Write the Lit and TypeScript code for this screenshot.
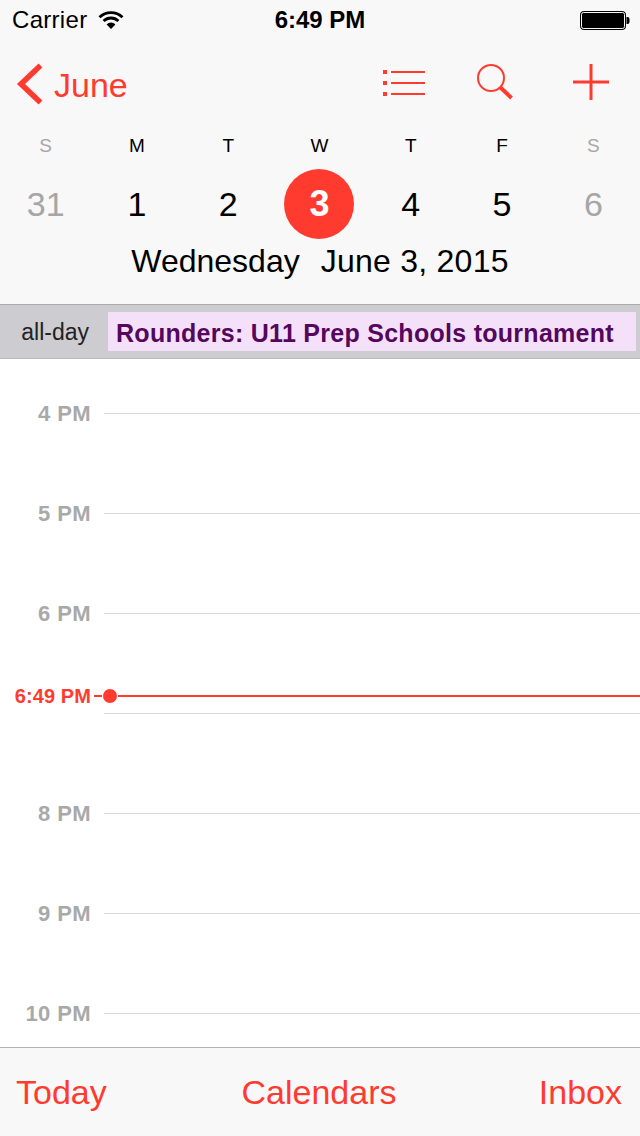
import { LitElement, html, css, svg } from 'lit';
import { customElement, state } from 'lit/decorators.js';

const RED = '#ff3b30';

@customElement('app-root')
export class AppRoot extends LitElement {
    @state() private _days = [
        { letter: 'S', num: '31', muted: true },
        { letter: 'M', num: '1' },
        { letter: 'T', num: '2' },
        { letter: 'W', num: '3', today: true },
        { letter: 'T', num: '4' },
        { letter: 'F', num: '5' },
        { letter: 'S', num: '6', muted: true },
    ];
    @state() private _hours = ['4 PM', '5 PM', '6 PM', '', '8 PM', '9 PM', '10 PM'];

    private _wifi() {
        return svg`<svg width="26" height="20" viewBox="0 0 26 20">
            <path d="M1.5 7.2a16.5 16.5 0 0 1 23 0" fill="none" stroke="#000" stroke-width="2.8"/>
            <path d="M5.6 11a10.6 10.6 0 0 1 14.8 0" fill="none" stroke="#000" stroke-width="2.8"/>
            <path d="M13 19l-4.4-4.6a6.2 6.2 0 0 1 8.8 0z" fill="#000"/>
        </svg>`;
    }

    private _battery() {
        return svg`<svg width="50" height="20" viewBox="0 0 50 20">
            <rect x="0.5" y="1.5" width="45" height="18" rx="3" fill="#000" stroke="#000" stroke-width="1"/>
            <rect x="1.5" y="2.5" width="43" height="16" rx="2" fill="none" stroke="#f8f8f8" stroke-width="1"/>
            <path d="M46.5 7h1a2 2 0 0 1 2 2v3a2 2 0 0 1-2 2h-1z" fill="#000"/>
        </svg>`;
    }

    private _back() {
        return svg`<svg width="30" height="44" viewBox="0 0 30 44">
            <path d="M27.5 2.5L8 21l19.5 18.5" fill="none" stroke="${RED}" stroke-width="5.6"/>
        </svg>`;
    }

    private _list() {
        return svg`<svg class="list" width="43" height="30" viewBox="0 0 43 30">
            <path d="M0 3h4M0 14h4M0 25h4" stroke="${RED}" stroke-width="4"/>
            <path d="M8 3h34M8 14h34M8 25h34" stroke="${RED}" stroke-width="2"/>
        </svg>`;
    }

    private _search() {
        return svg`<svg class="search" width="36" height="36" viewBox="0 0 36 36">
            <circle cx="14" cy="14" r="13" fill="none" stroke="${RED}" stroke-width="2"/>
            <path d="M23.5 23.5L34.5 34" stroke="${RED}" stroke-width="4"/>
        </svg>`;
    }

    private _plus() {
        return svg`<svg width="36" height="36" viewBox="0 0 36 36">
            <path d="M18 0v36M0 18h36" stroke="${RED}" stroke-width="3"/>
        </svg>`;
    }

    render() {
        return html`
            <header class="top">
                <div class="status">
                    <div class="status-left">Carrier ${this._wifi()}</div>
                    <div class="clock">6:49 PM</div>
                    <div class="status-right">${this._battery()}</div>
                </div>
                <div class="nav">
                    <div class="back">${this._back()}<span>June</span></div>
                    <div class="actions">${this._list()}${this._search()}${this._plus()}</div>
                </div>
                <div class="week">
                    ${this._days.map(d => html`<div class="letter ${d.muted ? 'muted' : ''}">${d.letter}</div>`)}
                    ${this._days.map(d => html`
                        <div class="num ${d.muted ? 'muted' : ''}">
                            <span class="${d.today ? 'today' : ''}">${d.num}</span>
                        </div>`)}
                </div>
                <div class="date"><span>Wednesday</span><span class="full">June 3, 2015</span></div>
            </header>

            <div class="allday">
                <div class="allday-label">all-day</div>
                <div class="event">Rounders: U11 Prep Schools tournament</div>
            </div>

            <main class="timeline">
                ${this._hours.map(h => html`
                    <div class="hour">
                        <div class="hour-label">${h}</div>
                        <div class="hour-line"></div>
                    </div>`)}
                <div class="now">
                    <span class="now-label">6:49 PM</span>
                    <span class="now-tick"></span>
                    <span class="now-dot"></span>
                    <span class="now-line"></span>
                </div>
            </main>

            <footer class="bottom">
                <span>Today</span>
                <span>Calendars</span>
                <span class="inbox">Inbox</span>
            </footer>
        `;
    }

    static styles = css`
        :host {
            display: flex;
            flex-direction: column;
            width: 640px;
            height: 1136px;
            overflow: hidden;
            background: #fff;
            font-family: 'Liberation Sans', Arial, sans-serif;
            color: #000;
        }

        .top {
            flex: none;
            height: 305px;
            box-sizing: border-box;
            background: #f8f8f8;
            border-bottom: 1px solid #a9a9ab;
        }

        .status {
            display: grid;
            grid-template-columns: 1fr auto 1fr;
            align-items: center;
            height: 40px;
            padding: 0 12px;
            font-size: 24px;
        }

        .status-left {
            display: flex;
            align-items: center;
            gap: 11px;
            letter-spacing: 0.3px;
        }

        .clock {
            font-weight: bold;
        }

        .status-right {
            display: flex;
            justify-content: flex-end;
            margin-right: -2px;
        }

        .status svg {
            display: block;
        }

        .nav {
            display: flex;
            justify-content: space-between;
            align-items: center;
            height: 88px;
            padding: 0 31px 0 13px;
            margin-top: -2px;
        }

        .back {
            display: flex;
            align-items: center;
            gap: 11px;
            padding-top: 6px;
            font-size: 34px;
            color: #ff3b30;
        }

        .actions {
            display: flex;
            align-items: center;
        }

        .actions svg {
            display: block;
        }

        .actions .list {
            margin: 3px 51px 0 0;
        }

        .actions .search {
            margin-right: 60px;
        }

        .week {
            display: grid;
            grid-template-columns: repeat(7, 1fr);
            margin: 8px 1px 0 0;
        }

        .letter {
            text-align: center;
            font-size: 19px;
            line-height: 24px;
            height: 35px;
        }

        .num {
            display: flex;
            justify-content: center;
            font-size: 34px;
            height: 70px;
        }

        .num span {
            width: 70px;
            height: 70px;
            line-height: 70px;
            text-align: center;
            border-radius: 50%;
        }

        .num .today {
            background: #ff3b30;
            color: #fff;
            font-size: 36px;
            font-weight: bold;
        }

        .muted {
            color: #a6a6a6;
        }

        .date {
            display: flex;
            justify-content: center;
            gap: 21px;
            font-size: 32px;
            line-height: 44px;
        }

        .date .full {
            letter-spacing: 0.25px;
        }

        .allday {
            flex: none;
            display: flex;
            align-items: center;
            height: 54px;
            box-sizing: border-box;
            background: #ccccd1;
            border-bottom: 1px solid #b9b9bb;
        }

        .allday-label {
            width: 108px;
            padding: 2px 19px 0 0;
            box-sizing: border-box;
            text-align: right;
            font-size: 23px;
            color: #222;
        }

        .event {
            width: 528px;
            height: 39px;
            line-height: 42px;
            padding-left: 8px;
            box-sizing: border-box;
            background: #f4e1f9;
            color: #55075d;
            font-size: 25px;
            font-weight: bold;
            letter-spacing: 0.28px;
            white-space: nowrap;
        }

        .timeline {
            position: relative;
            flex: 1;
            min-height: 0;
            overflow: hidden;
            padding-top: 54px;
        }

        .hour {
            display: flex;
            height: 100px;
        }

        .hour-label {
            width: 91px;
            margin-right: 13px;
            height: 20px;
            margin-top: -9px;
            line-height: 20px;
            text-align: right;
            color: #a9a9a9;
            font-size: 22px;
            font-weight: bold;
            letter-spacing: 0.4px;
        }

        .hour-line {
            flex: 1;
            height: 1px;
            background: #d9d9d9;
        }

        .now {
            position: absolute;
            top: 327px;
            left: 0;
            right: 0;
            height: 20px;
            display: flex;
            align-items: center;
            color: #ff3b30;
        }

        .now-label {
            width: 91px;
            text-align: right;
            font-size: 20px;
            font-weight: bold;
            letter-spacing: 0.1px;
        }

        .now-tick {
            width: 8px;
            height: 2px;
            margin-left: 3px;
            background: #ff3b30;
        }

        .now-dot {
            width: 14px;
            height: 14px;
            margin-left: 1px;
            border-radius: 50%;
            background: #ff3b30;
        }

        .now-line {
            flex: 1;
            height: 2px;
            margin-left: 1px;
            background: #ff3b30;
        }

        .bottom {
            flex: none;
            display: grid;
            grid-template-columns: 1fr auto 1fr;
            align-items: center;
            height: 89px;
            box-sizing: border-box;
            padding: 0 18px 0 16px;
            background: #f8f8f8;
            border-top: 1px solid #b2b2b2;
            color: #ff3b30;
            font-size: 34px;
        }

        .inbox {
            text-align: right;
        }
    `;
}
